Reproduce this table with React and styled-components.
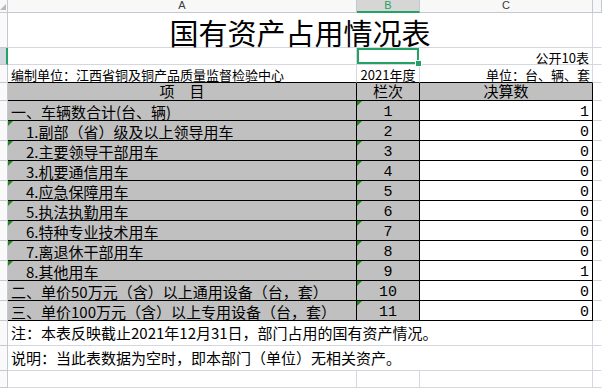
import React from "react";
import styled, { createGlobalStyle, css } from "styled-components";

const GREEN = "#21a366";
const GRID = "#d4d7de";
const HEAD_LINE = "#c4c8d0";
const FILL = "#c0c0c0";
const COLS = "8px 349px 63px 173px 1fr";

const GlobalStyle = createGlobalStyle`
  html, body {
    margin: 0;
    padding: 0;
    background: #fff;
  }
  body {
    font-family: "Noto Sans CJK SC", sans-serif;
    color: #000;
    overflow: hidden;
  }
`;

const Sheet = styled.div`
  width: 602px;
  height: 388px;
  overflow: hidden;
  background: #fff;
`;

const Row = styled.div`
  display: grid;
  grid-template-columns: ${COLS};
  height: ${({ $h }) => $h}px;
`;

const Corner = styled.div`
  position: relative;
  box-sizing: border-box;
  background: #f8f8f8;
  border-right: 1px solid ${HEAD_LINE};
  border-bottom: 1px solid ${HEAD_LINE};

  &::after {
    content: "";
    position: absolute;
    right: 1px;
    bottom: 2px;
    border-bottom: 6px solid #b8b8b8;
    border-left: 6px solid transparent;
  }
`;

const ColHead = styled.div`
  box-sizing: border-box;
  display: flex;
  align-items: flex-start;
  justify-content: center;
  background: ${({ $active }) => ($active ? "#d6d6d6" : "#f8f8f8")};
  color: ${({ $active }) => ($active ? GREEN : "#3a3a3a")};
  border-right: 1px solid ${HEAD_LINE};
  border-bottom: ${({ $active }) =>
    $active ? `2px solid ${GREEN}` : `1px solid ${HEAD_LINE}`};
  font: 11px/11px "Liberation Sans", sans-serif;
`;

const RowHead = styled.div`
  box-sizing: border-box;
  background: ${({ $active }) => ($active ? "#d3d7de" : "#fafafa")};
  border-right: ${({ $active }) =>
    $active ? `2px solid ${GREEN}` : `1px solid ${HEAD_LINE}`};
  border-bottom: 1px solid ${HEAD_LINE};
`;

const justify = { left: "flex-start", center: "center", right: "flex-end" };

const Cell = styled.div`
  position: relative;
  box-sizing: border-box;
  display: flex;
  align-items: flex-end;
  justify-content: ${({ $align }) => justify[$align || "left"]};
  grid-column: ${({ $span }) => $span || "auto"};
  padding: 0 ${({ $pr }) => $pr || 0}px ${({ $pb }) => $pb ?? 1}px
    ${({ $pl }) => $pl || 0}px;
  background: ${({ $fill }) => $fill || "#fff"};
  border-right: 1px solid ${({ $rb }) => $rb || "transparent"};
  border-bottom: 1px solid ${({ $bb }) => $bb || GRID};
  font-size: ${({ $size }) => $size || 15}px;
  line-height: 1;
  font-family: ${({ $mono }) =>
    $mono
      ? `"Liberation Mono", "Noto Sans CJK SC", monospace`
      : `"Noto Sans CJK SC", sans-serif`};
  white-space: nowrap;

  ${({ $mark }) =>
    $mark &&
    css`
      &::before {
        content: "";
        position: absolute;
        top: 0;
        left: 0;
        border-top: 5px solid #1b8a1b;
        border-right: 5px solid transparent;
      }
    `}

  ${({ $selected }) =>
    $selected &&
    css`
      box-shadow: inset 0 0 0 2px ${GREEN};
      &::after {
        content: "";
        position: absolute;
        right: -3px;
        bottom: -3px;
        width: 5px;
        height: 5px;
        background: ${GREEN};
        border: 1px solid #fff;
        z-index: 2;
      }
    `}
`;

const items = [
  { name: "一、车辆数合计(台、辆)", no: 1, val: 1 },
  { name: "1.副部（省）级及以上领导用车", no: 2, val: 0, sub: true },
  { name: "2.主要领导干部用车", no: 3, val: 0, sub: true },
  { name: "3.机要通信用车", no: 4, val: 0, sub: true },
  { name: "4.应急保障用车", no: 5, val: 0, sub: true },
  { name: "5.执法执勤用车", no: 6, val: 0, sub: true },
  { name: "6.特种专业技术用车", no: 7, val: 0, sub: true },
  { name: "7.离退休干部用车", no: 8, val: 0, sub: true },
  { name: "8.其他用车", no: 9, val: 1, sub: true },
  { name: "二、单价50万元（含）以上通用设备（台，套）", no: 10, val: 0 },
  { name: "三、单价100万元（含）以上专用设备（台，套）", no: 11, val: 0 },
];

const notes = [
  "注：本表反映截止2021年12月31日，部门占用的国有资产情况。",
  "说明：当此表数据为空时，即本部门（单位）无相关资产。",
];

export default function App() {
  return (
    <>
      <GlobalStyle />
      <Sheet>
        <Row $h={13}>
          <Corner />
          <ColHead>A</ColHead>
          <ColHead $active>B</ColHead>
          <ColHead>C</ColHead>
          <ColHead />
        </Row>

        <Row $h={35}>
          <RowHead />
          <Cell $span="2 / 5" $align="center" $rb={GRID} $size={29} $pb={0}>
            国有资产占用情况表
          </Cell>
          <Cell />
        </Row>

        <Row $h={17}>
          <RowHead $active />
          <Cell $rb={GRID} />
          <Cell $selected />
          <Cell $align="right" $pr={3} $rb={GRID} $size={13} $pb={0}>
            公开10表
          </Cell>
          <Cell />
        </Row>

        <Row $h={18}>
          <RowHead />
          <Cell $pl={3} $rb={GRID} $bb="#000" $size={13}>
            编制单位：江西省铜及铜产品质量监督检验中心
          </Cell>
          <Cell $align="center" $rb={GRID} $bb="#000" $size={13}>
            2021年度
          </Cell>
          <Cell $align="right" $pr={2} $rb={GRID} $bb="#000" $size={13}>
            单位：台、辆、套
          </Cell>
          <Cell />
        </Row>

        <Row $h={18}>
          <RowHead />
          <Cell $align="center" $fill={FILL} $rb="#000" $bb="#000" $pb={2}>
            项　目
          </Cell>
          <Cell $align="center" $fill={FILL} $rb="#000" $bb="#000" $pb={2}>
            栏次
          </Cell>
          <Cell $align="center" $fill={FILL} $rb="#000" $bb="#000" $pb={2}>
            决算数
          </Cell>
          <Cell />
        </Row>

        {items.map((it) => (
          <Row key={it.no} $h={20}>
            <RowHead />
            <Cell
              $fill={FILL}
              $rb="#000"
              $bb="#000"
              $pl={it.sub ? 18 : 3}
              $mark={it.sub}
            >
              {it.name}
            </Cell>
            <Cell $align="center" $fill={FILL} $rb="#000" $bb="#000" $mono $pb={0} $mark>
              {it.no}
            </Cell>
            <Cell $align="right" $pr={3} $rb="#000" $bb="#000" $mono $pb={0}>
              {it.val}
            </Cell>
            <Cell />
          </Row>
        ))}

        {notes.map((n) => (
          <Row key={n} $h={25}>
            <RowHead />
            <Cell $span="2 / 5" $pl={3} $rb={GRID} $pb={5}>
              {n}
            </Cell>
            <Cell />
          </Row>
        ))}

        <Row $h={17}>
          <RowHead />
          <Cell $rb={GRID} />
          <Cell $rb={GRID} />
          <Cell $rb={GRID} />
          <Cell />
        </Row>
      </Sheet>
    </>
  );
}
